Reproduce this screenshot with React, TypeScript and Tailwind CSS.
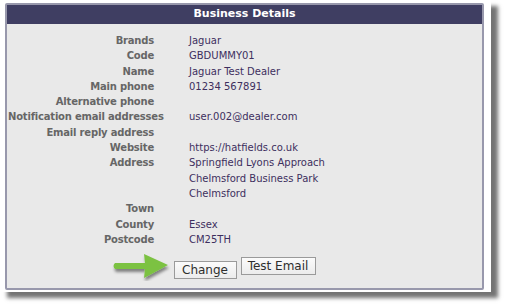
import React from "react";

const rows: [string, string][] = [
  ["Brands", "Jaguar"],
  ["Code", "GBDUMMY01"],
  ["Name", "Jaguar Test Dealer"],
  ["Main phone", "01234 567891"],
  ["Alternative phone", ""],
  ["Notification email addresses", "user.002@dealer.com"],
  ["Email reply address", ""],
  ["Website", "https://hatfields.co.uk"],
  ["Address", "Springfield Lyons Approach"],
  ["", "Chelmsford Business Park"],
  ["", "Chelmsford"],
  ["Town", ""],
  ["County", "Essex"],
  ["Postcode", "CM25TH"],
];

function Arrow() {
  return (
    <svg width="62" height="30" viewBox="0 0 62 30" className="absolute left-[-62px] top-[-6px]">
      <defs>
        <filter id="sh" x="-20%" y="-20%" width="150%" height="160%">
          <feDropShadow dx="1" dy="3" stdDeviation="1.6" floodColor="#000" floodOpacity="0.45" />
        </filter>
      </defs>
      <path
        d="M3 12 L33 12 L32 3 L56 14 L32 27 L33 18 L3 18 Q0 15 3 12 Z"
        fill="#7cc242"
        filter="url(#sh)"
      />
    </svg>
  );
}

export default function App() {
  return (
    <div className="w-[506px] h-[308px] bg-white font-['DejaVu_Sans',Verdana,sans-serif]">
      <div className="w-[491px] h-[292px] bg-white pt-[3px] pl-[5px] shadow-[7px_6px_4px_rgba(0,0,0,0.55)]">
        <div className="w-[479px] h-[287px] border-2 border-[#9898ac] rounded-[2px] bg-[#e9e9e9] flex flex-col">
          <div className="h-[19px] bg-[#3f3e62] text-white text-[11px] font-bold flex items-center justify-center">
            Business Details
          </div>
          <div className="pt-[9px] pl-[1px] grid grid-cols-[146px_1fr] gap-x-[35px] text-[10px] leading-[15.3px]">
            {rows.map(([label, value], i) => (
              <React.Fragment key={i}>
                <div className="text-right font-bold text-[#666] tracking-[-0.2px] whitespace-nowrap">{label}</div>
                <div className="text-[#3d2f5e] whitespace-nowrap">{value || "\u00a0"}</div>
              </React.Fragment>
            ))}
          </div>
          <div className="mt-[10px] flex justify-center gap-[4px]">
            <div className="relative">
              <Arrow />
              <button className="h-[18px] w-[63px] border border-[#9a9a9a] bg-gradient-to-b from-[#fbfbfb] to-[#ececec] text-[12px] text-[#2e2e2e] leading-none">
                Change
              </button>
            </div>
            <button className="h-[18px] w-[75px] border border-[#9a9a9a] bg-gradient-to-b from-[#fbfbfb] to-[#ececec] text-[12px] text-[#2e2e2e] leading-none">
              Test Email
            </button>
          </div>
        </div>
      </div>
    </div>
  );
}
